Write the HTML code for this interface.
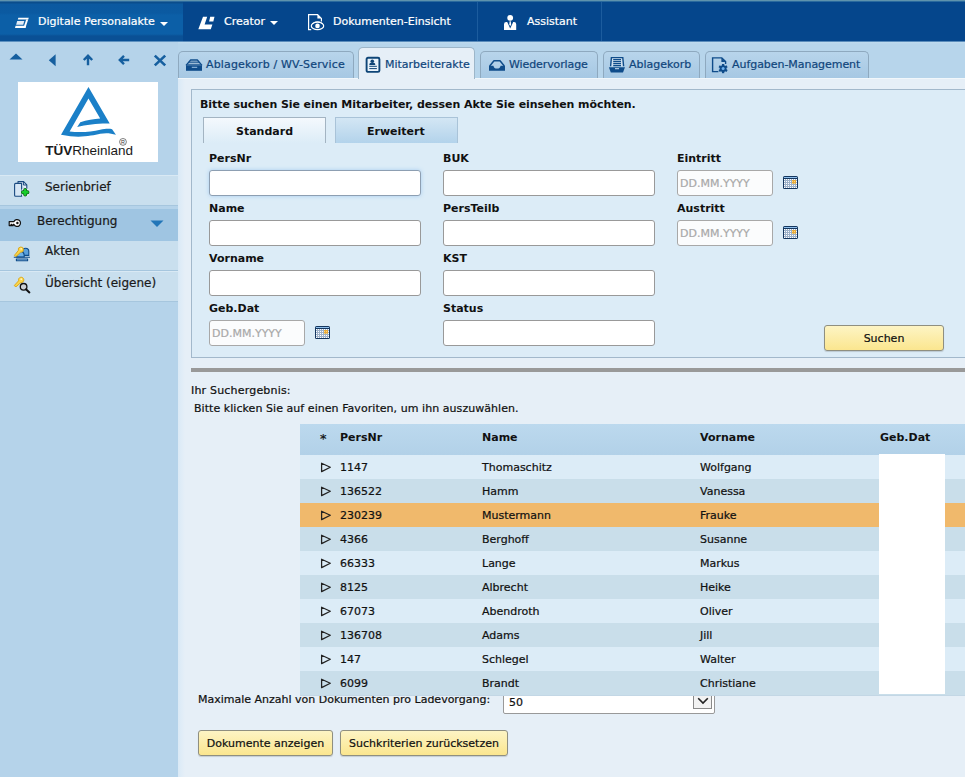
<!DOCTYPE html>
<html lang="de">
<head>
<meta charset="utf-8">
<title>Digitale Personalakte</title>
<style>
html,body{margin:0;padding:0;}
body{width:965px;height:777px;overflow:hidden;position:relative;background:#e6eff7;font-family:"DejaVu Sans","Liberation Sans",sans-serif;font-size:11px;color:#111;}
.a{position:absolute;}
.t{position:absolute;white-space:nowrap;line-height:14px;font-size:11px;-webkit-text-stroke:0.22px currentColor;}
.t.b{-webkit-text-stroke:0;}
.btn{-webkit-text-stroke:0.22px currentColor;}
.b{font-weight:bold;}
/* top bar */
#top{left:0;top:0;width:965px;height:42px;background:linear-gradient(#05468c 0,#05468c 41px,#5a8cbb 41px,#5a8cbb 42px);}
#top .seg1{left:0;top:0;width:183px;height:42px;background:linear-gradient(#0a4d8c 0,#0a4d8c 3px,#0b59a0 4px,#0b5aa1 13px,#0c5fa7 15px,#0c5fa7 34px,#0a5095 36px,#0a5095 41px,#5d91c0 41px,#5d91c0 42px);}
#top .line{left:0;top:0;width:965px;height:2px;background:linear-gradient(#5f93ad 0,#5f93ad 1px,#2a6a9e 1px,#2a6a9e 2px);}
#top .sep{top:2px;width:1px;height:39px;background:#1c5c9e;}
#top .t{color:#fff;top:15px;}
/* sidebar */
#side{left:0;top:42px;width:178px;height:735px;background:#b5d3ea;}
.mi{left:0;width:178px;background:#c9dfee;border-top:1px solid #d9e9f4;border-bottom:1px solid #a6c6de;box-sizing:border-box;}
.mi .t{font-size:12px;left:45px;color:#1a1a1a;}
/* tabs */
#tabbar{left:178px;top:42px;width:787px;height:36px;background:linear-gradient(#c0dbee 0,#b7d5eb 2px,#b7d5eb 36px);}
.tab{top:51px;height:27px;box-sizing:border-box;border:1px solid #8ea9bf;border-bottom:none;border-radius:5px 5px 0 0;background:linear-gradient(#b8d5eb,#a6c8e3);}
.tab .t{color:#10467c;top:6px;}
.tab.act{top:47px;height:32px;background:#e6eff7;border-color:#9db6c9;}
.tab.act .t{top:10px;}
#content{left:178px;top:78px;width:787px;height:699px;background:#e6eff7;border-top:1px solid #f1f7fb;box-sizing:border-box;background:linear-gradient(90deg,#d9e9f6 0,#dfecf7 3px,#e6eff7 7px);}
/* form panel */
#panel{left:191px;top:89px;width:800px;height:269px;box-sizing:border-box;background:#dcecf7;border:1px solid #a2b8cb;}
.in{height:26px;box-sizing:border-box;background:#fff;border:1px solid #999;border-radius:3px;}
.ph{color:#a9a9a9;}
.btn{box-sizing:border-box;height:26px;border:1px solid #8f8f80;border-radius:3px;background:linear-gradient(#fdf4c4,#fbe68f);text-align:center;line-height:26px;font-size:11px;color:#111;box-shadow:0 1px 1px rgba(0,0,0,.15);}
/* table */
.row{left:300px;width:665px;height:24px;}
.row .t{top:6px;}
.r0{background:#dcecf7;}
.r1{background:#c9deea;}
.sel{background:#f0b96c;}
</style>
</head>
<body>
<!-- TOP BAR -->
<div id="top" class="a">
  <div class="a seg1"></div>
  <div class="a line"></div>
  <div class="a sep" style="left:477px"></div>
  <div class="a sep" style="left:601px"></div>
  <span class="t" style="left:38px">Digitale Personalakte</span>
  <span class="t" style="left:224px">Creator</span>
  <span class="t" style="left:333px">Dokumenten-Einsicht</span>
  <span class="t" style="left:527px">Assistant</span>
</div>

<!-- SIDEBAR -->
<div id="side" class="a"></div>
<div class="a" id="logo" style="left:18px;top:82px;width:140px;height:80px;background:#fff;"></div>
<div class="a mi" style="top:175px;height:31px;"><span class="t" style="top:4px">Serienbrief</span></div>
<div class="a mi" style="top:209px;height:32px;background:#9fc5e2;border-color:#9fc5e2;"><span class="t" style="top:4px;left:37px">Berechtigung</span></div>
<div class="a mi" style="top:241px;height:30px;border-top:none"><span class="t" style="top:3px">Akten</span></div>
<div class="a mi" style="top:271px;height:31px;"><span class="t" style="top:4px">Übersicht (eigene)</span></div>

<!-- TABS -->
<div id="tabbar" class="a"></div>
<div id="content" class="a"></div>
<div class="a tab" style="left:178px;width:176px;"><span class="t" style="left:27px;letter-spacing:0.15px">Ablagekorb / WV-Service</span></div>
<div class="a tab act" style="left:358px;width:117px;"><span class="t" style="left:26px">Mitarbeiterakte</span></div>
<div class="a tab" style="left:480px;width:118px;"><span class="t" style="left:28px;letter-spacing:-0.1px">Wiedervorlage</span></div>
<div class="a tab" style="left:603px;width:97px;"><span class="t" style="left:25px">Ablagekorb</span></div>
<div class="a tab" style="left:705px;width:164px;"><span class="t" style="left:26px;letter-spacing:-0.05px">Aufgaben-Management</span></div>

<!-- FORM PANEL -->
<div id="panel" class="a"></div>
<span class="t b" style="left:200px;top:98px;letter-spacing:-0.07px">Bitte suchen Sie einen Mitarbeiter, dessen Akte Sie einsehen möchten.</span>

<!-- inner tabs -->
<div class="a" style="left:203px;top:117px;width:123px;height:26px;box-sizing:border-box;border:1px solid #a3b4c2;border-bottom:none;background:linear-gradient(#f4f9fd,#dcecf7);"></div>
<span class="t b" style="left:236px;top:125px">Standard</span>
<div class="a" style="left:335px;top:117px;width:123px;height:26px;box-sizing:border-box;border:1px solid #a9c3d8;border-bottom:none;background:linear-gradient(#d3e6f4,#b3d3eb);"></div>
<span class="t b" style="left:367px;top:125px">Erweitert</span>

<!-- labels -->
<span class="t b" style="left:209px;top:152px">PersNr</span>
<span class="t b" style="left:443px;top:152px">BUK</span>
<span class="t b" style="left:677px;top:152px">Eintritt</span>
<span class="t b" style="left:209px;top:202px">Name</span>
<span class="t b" style="left:443px;top:202px">PersTeilb</span>
<span class="t b" style="left:677px;top:202px">Austritt</span>
<span class="t b" style="left:209px;top:252px">Vorname</span>
<span class="t b" style="left:443px;top:252px">KST</span>
<span class="t b" style="left:209px;top:302px">Geb.Dat</span>
<span class="t b" style="left:443px;top:302px">Status</span>

<!-- inputs -->
<div class="a in" style="left:209px;top:170px;width:212px;border-color:#8d9fb2;box-shadow:0 0 4px #a8cdf0;"></div>
<div class="a in" style="left:443px;top:170px;width:212px;"></div>
<div class="a in" style="left:677px;top:170px;width:96px;border-color:#a8a8a8;background:#fbfcfd;"></div>
<span class="t ph" style="left:680px;top:177px">DD.MM.YYYY</span>
<div class="a in" style="left:209px;top:220px;width:212px;"></div>
<div class="a in" style="left:443px;top:220px;width:212px;"></div>
<div class="a in" style="left:677px;top:220px;width:96px;border-color:#a8a8a8;background:#fbfcfd;"></div>
<span class="t ph" style="left:680px;top:227px">DD.MM.YYYY</span>
<div class="a in" style="left:209px;top:270px;width:212px;"></div>
<div class="a in" style="left:443px;top:270px;width:212px;"></div>
<div class="a in" style="left:209px;top:320px;width:96px;border-color:#a8a8a8;background:#fbfcfd;"></div>
<span class="t ph" style="left:212px;top:327px">DD.MM.YYYY</span>
<div class="a in" style="left:443px;top:320px;width:212px;"></div>

<div class="a btn" style="left:824px;top:325px;width:120px;">Suchen</div>

<!-- separator -->
<div class="a" style="left:191px;top:368px;width:774px;height:4px;background:#999;"></div>

<!-- results -->
<span class="t" style="left:191px;top:384px;letter-spacing:0.19px">Ihr Suchergebnis:</span>
<span class="t" style="left:194px;top:402px;letter-spacing:0.055px">Bitte klicken Sie auf einen Favoriten, um ihn auszuwählen.</span>

<!-- bottom (under table) -->
<span class="t" style="left:198px;top:693px">Maximale Anzahl von Dokumenten pro Ladevorgang:</span>
<div class="a" style="left:503px;top:690px;width:212px;height:24px;box-sizing:border-box;background:#fff;border:1px solid #999;border-radius:2px;"></div>
<span class="t" style="left:509px;top:696px">50</span>
<div class="a" style="left:693px;top:690px;width:19px;height:19px;box-sizing:border-box;border:1px solid #8a8a8a;background:#f2f2f2;"></div>
<div class="a btn" style="left:198px;top:730px;width:135px;">Dokumente anzeigen</div>
<div class="a btn" style="left:340px;top:730px;width:168px;">Suchkriterien zurücksetzen</div>

<!-- table -->
<div class="a row" style="top:424px;height:31px;background:linear-gradient(#bcd9ee,#b2d1e8);">
  <span class="t" style="left:20px;top:8px;font-size:13px">*</span>
  <span class="t b" style="left:40px;top:7px">PersNr</span>
  <span class="t b" style="left:182px;top:7px">Name</span>
  <span class="t b" style="left:400px;top:7px">Vorname</span>
  <span class="t b" style="left:580px;top:7px">Geb.Dat</span>
</div>
<div class="a row r0" style="top:455px"><svg class="a" style="left:20px;top:7px" width="12" height="11" viewBox="0 0 12 11"><path d="M1.6 1.2 L10.3 5.3 L1.6 9.6 Z" fill="none" stroke="#222" stroke-width="1.25" stroke-linejoin="round"/></svg><span class="t" style="left:40px">1147</span><span class="t" style="left:182px">Thomaschitz</span><span class="t" style="left:400px">Wolfgang</span></div>
<div class="a row r1" style="top:479px"><svg class="a" style="left:20px;top:7px" width="12" height="11" viewBox="0 0 12 11"><path d="M1.6 1.2 L10.3 5.3 L1.6 9.6 Z" fill="none" stroke="#222" stroke-width="1.25" stroke-linejoin="round"/></svg><span class="t" style="left:40px">136522</span><span class="t" style="left:182px">Hamm</span><span class="t" style="left:400px">Vanessa</span></div>
<div class="a row sel" style="top:503px"><svg class="a" style="left:20px;top:7px" width="12" height="11" viewBox="0 0 12 11"><path d="M1.6 1.2 L10.3 5.3 L1.6 9.6 Z" fill="none" stroke="#222" stroke-width="1.25" stroke-linejoin="round"/></svg><span class="t" style="left:40px">230239</span><span class="t" style="left:182px">Mustermann</span><span class="t" style="left:400px">Frauke</span></div>
<div class="a row r1" style="top:527px"><svg class="a" style="left:20px;top:7px" width="12" height="11" viewBox="0 0 12 11"><path d="M1.6 1.2 L10.3 5.3 L1.6 9.6 Z" fill="none" stroke="#222" stroke-width="1.25" stroke-linejoin="round"/></svg><span class="t" style="left:40px">4366</span><span class="t" style="left:182px">Berghoff</span><span class="t" style="left:400px">Susanne</span></div>
<div class="a row r0" style="top:551px"><svg class="a" style="left:20px;top:7px" width="12" height="11" viewBox="0 0 12 11"><path d="M1.6 1.2 L10.3 5.3 L1.6 9.6 Z" fill="none" stroke="#222" stroke-width="1.25" stroke-linejoin="round"/></svg><span class="t" style="left:40px">66333</span><span class="t" style="left:182px">Lange</span><span class="t" style="left:400px">Markus</span></div>
<div class="a row r1" style="top:575px"><svg class="a" style="left:20px;top:7px" width="12" height="11" viewBox="0 0 12 11"><path d="M1.6 1.2 L10.3 5.3 L1.6 9.6 Z" fill="none" stroke="#222" stroke-width="1.25" stroke-linejoin="round"/></svg><span class="t" style="left:40px">8125</span><span class="t" style="left:182px">Albrecht</span><span class="t" style="left:400px">Heike</span></div>
<div class="a row r0" style="top:599px"><svg class="a" style="left:20px;top:7px" width="12" height="11" viewBox="0 0 12 11"><path d="M1.6 1.2 L10.3 5.3 L1.6 9.6 Z" fill="none" stroke="#222" stroke-width="1.25" stroke-linejoin="round"/></svg><span class="t" style="left:40px">67073</span><span class="t" style="left:182px">Abendroth</span><span class="t" style="left:400px">Oliver</span></div>
<div class="a row r1" style="top:623px"><svg class="a" style="left:20px;top:7px" width="12" height="11" viewBox="0 0 12 11"><path d="M1.6 1.2 L10.3 5.3 L1.6 9.6 Z" fill="none" stroke="#222" stroke-width="1.25" stroke-linejoin="round"/></svg><span class="t" style="left:40px">136708</span><span class="t" style="left:182px">Adams</span><span class="t" style="left:400px">Jill</span></div>
<div class="a row r0" style="top:647px"><svg class="a" style="left:20px;top:7px" width="12" height="11" viewBox="0 0 12 11"><path d="M1.6 1.2 L10.3 5.3 L1.6 9.6 Z" fill="none" stroke="#222" stroke-width="1.25" stroke-linejoin="round"/></svg><span class="t" style="left:40px">147</span><span class="t" style="left:182px">Schlegel</span><span class="t" style="left:400px">Walter</span></div>
<div class="a row r1" style="top:671px"><svg class="a" style="left:20px;top:7px" width="12" height="11" viewBox="0 0 12 11"><path d="M1.6 1.2 L10.3 5.3 L1.6 9.6 Z" fill="none" stroke="#222" stroke-width="1.25" stroke-linejoin="round"/></svg><span class="t" style="left:40px">6099</span><span class="t" style="left:182px">Brandt</span><span class="t" style="left:400px">Christiane</span></div>
<div class="a" style="left:300px;top:695px;width:665px;height:1px;background:#c3d7e5;"></div>
<div class="a" style="left:879px;top:454px;width:66px;height:240px;background:#fff;"></div>

<!-- top bar icons -->
<svg class="a" style="left:14px;top:17px" width="16" height="12" viewBox="0 0 16 12">
  <polygon points="4.3,0.7 14.8,0.7 14.2,2.4 3.8,2.4" fill="#fff"/>
  <polygon points="12.2,2.4 14.2,2.4 11.4,10.9 9.4,10.9" fill="#fff"/>
  <polygon points="1.6,8.8 12,8.8 11.4,10.9 1,10.9" fill="#fff"/>
  <polygon points="3.2,3.9 10.3,3.9 9.2,7.7 2.1,7.7" fill="#e4edf6"/>
</svg>
<svg class="a" style="left:160px;top:22px" width="8" height="4" viewBox="0 0 8 4"><polygon points="0,0 8,0 4,4" fill="#fff"/></svg>
<svg class="a" style="left:198px;top:16px" width="17" height="14" viewBox="0 0 17 14">
  <polygon points="5,0.7 9.2,0.7 6.6,8.5 14.4,8.5 12.8,13.2 0.3,13.2" fill="#fff"/>
  <polygon points="12.2,0.7 16.5,0.7 15.3,5.4 11.1,5.4" fill="#fff"/>
</svg>
<svg class="a" style="left:270px;top:21px" width="8" height="4" viewBox="0 0 8 4"><polygon points="0,0 8,0 4,4" fill="#fff"/></svg>
<svg class="a" style="left:307px;top:13px" width="18" height="19" viewBox="0 0 18 19">
  <path d="M4.2 16.6 H1.6 V1.6 H10.6 L14.4 5.4 V8.5" fill="none" stroke="#fff" stroke-width="1.2"/>
  <path d="M10.4 1.6 V5.6 H14.4 Z" fill="#fff"/>
  <ellipse cx="10.5" cy="12.9" rx="6.2" ry="3.7" fill="none" stroke="#fff" stroke-width="1.2"/>
  <path d="M5 11 Q10.5 6.5 16 11" fill="none" stroke="#fff" stroke-width="1"/>
  <circle cx="10.5" cy="12.9" r="2.3" fill="#fff"/>
</svg>
<svg class="a" style="left:503px;top:14px" width="14" height="17" viewBox="0 0 14 17">
  <circle cx="7.2" cy="3.8" r="2.9" fill="#fff"/>
  <path d="M1 15.9 V10.2 Q1 8 3.2 8 H4.2 L7.2 14.4 L10.2 8 H11 Q13.2 8 13.2 10.2 V15.9 Z" fill="#fff"/>
  <path d="M6.6 7.2 H7.8 L8.1 10.6 L7.2 12.2 L6.3 10.6 Z" fill="#fff"/>
</svg>

<!-- sidebar toolbar -->
<svg class="a" style="left:9px;top:53px" width="14" height="7" viewBox="0 0 14 7"><polygon points="7,0.5 13.5,6.5 0.5,6.5" fill="#165f9f"/></svg>
<svg class="a" style="left:48px;top:54px" width="8" height="13" viewBox="0 0 8 13"><polygon points="7.6,0.3 7.6,12.3 0.8,6.3" fill="#165f9f"/></svg>
<svg class="a" style="left:82px;top:54px" width="12" height="12" viewBox="0 0 12 12"><path d="M6 11.2 V2.4 M1.8 6 L6 1.8 L10.2 6" fill="none" stroke="#165f9f" stroke-width="2.4"/></svg>
<svg class="a" style="left:118px;top:54px" width="12" height="12" viewBox="0 0 12 12"><path d="M11.2 6 H2.4 M6 1.8 L1.8 6 L6 10.2" fill="none" stroke="#165f9f" stroke-width="2.4"/></svg>
<svg class="a" style="left:153px;top:54px" width="14" height="13" viewBox="0 0 14 13"><path d="M1.8 1.6 L12.2 11.4 M12.2 1.6 L1.8 11.4" fill="none" stroke="#165f9f" stroke-width="2.6"/></svg>

<!-- logo -->
<svg class="a" style="left:38px;top:82px" width="100" height="80" viewBox="0 0 965 772">
  <path d="M487 48 L692 400 C600 396 470 410 378 434 L408 388 C470 370 540 358 600 353 L487 160 L305 478 C420 492 520 478 600 460 C650 450 690 450 715 455 L752 510 C700 492 650 490 600 500 C520 518 400 546 222 510 Z" fill="#1b80c8"/>
  <circle cx="820" cy="578" r="33" fill="none" stroke="#333" stroke-width="6"/>
  <text x="820" y="600" font-family="Liberation Sans, sans-serif" font-size="52" text-anchor="middle" fill="#333">R</text>
  <text x="70" y="708" font-family="Liberation Sans, sans-serif" font-size="121" fill="#1a1a1a" textLength="848" lengthAdjust="spacingAndGlyphs"><tspan font-weight="bold">TÜV</tspan>Rheinland</text>
</svg>

<!-- tab icons -->
<svg class="a" style="left:185px;top:59px" width="18" height="13" viewBox="0 0 18 13">
  <path d="M1 6.4 L5.6 1 H12.4 L17 6.4" fill="#cfe0ee" stroke="#0f4c8a" stroke-width="1.3" stroke-linejoin="round"/>
  <path d="M3.9 3.1 H14.1 M2.2 5.2 H15.8" stroke="#0f4c8a" stroke-width="1.1"/>
  <rect x="1" y="6.2" width="16" height="5.6" fill="#0f4c8a"/>
  <rect x="6.8" y="7.8" width="5.4" height="1" fill="#9ec3e4"/>
</svg>
<svg class="a" style="left:365px;top:56px" width="17" height="18" viewBox="0 0 17 18">
  <rect x="1.6" y="1.8" width="12.8" height="14.1" rx="1.4" fill="#e9f3fb" stroke="#0e4577" stroke-width="1.9"/>
  <circle cx="7.3" cy="5.3" r="1.8" fill="#0e4577"/>
  <path d="M4.3 8.9 Q4.3 6.5 7.3 6.5 Q10.3 6.5 10.3 8.9 Z" fill="#0e4577"/>
  <path d="M4.3 10.3 H11.9 M4.3 12.6 H11.9" stroke="#0e4577" stroke-width="1"/>
</svg>
<svg class="a" style="left:488px;top:59px" width="18" height="13" viewBox="0 0 18 13">
  <path d="M1.7 7 L6 1.7 H12 L16.3 7" fill="none" stroke="#0f4c8a" stroke-width="1.5" stroke-linejoin="round"/>
  <path d="M1 6.7 H5.4 Q6 9.6 9 9.6 Q12 9.6 12.6 6.7 H17 V11.8 H1 Z" fill="#0f4c8a"/>
</svg>
<svg class="a" style="left:608px;top:56px" width="18" height="18" viewBox="0 0 18 18">
  <path d="M2.6 10.2 L3.4 1.6 H14.8 L15.6 10.2" fill="#cfe0ee" stroke="#0f4c8a" stroke-width="1.4"/>
  <path d="M5.2 3.6 H13 M5.2 5.6 H13 M5.2 7.6 H13 M5.2 9.6 H13" stroke="#0f4c8a" stroke-width="1.1"/>
  <path d="M0.9 11.2 H17 L15 16.6 H2.8 Z" fill="#0f4c8a"/>
  <rect x="7" y="12.2" width="4" height="1" fill="#cfe0ee"/>
</svg>
<svg class="a" style="left:711px;top:56px" width="18" height="18" viewBox="0 0 18 18">
  <path d="M7.4 15.6 H1.6 V1.9 H10.8 L14.6 5.6 V8" fill="none" stroke="#0f4c8a" stroke-width="1.4"/>
  <path d="M10.4 1.9 V6 H14.6 Z" fill="#0f4c8a"/>
  <g transform="translate(12.1,12.6)">
    <circle r="3.4" fill="#0f4c8a"/>
    <g fill="#0f4c8a">
      <rect x="-1.15" y="-4.6" width="2.3" height="9.2"/>
      <rect x="-1.15" y="-4.6" width="2.3" height="9.2" transform="rotate(60)"/>
      <rect x="-1.15" y="-4.6" width="2.3" height="9.2" transform="rotate(120)"/>
    </g>
    <circle r="1.5" fill="#6fb3f0"/>
  </g>
</svg>

<!-- sidebar icons -->
<svg class="a" style="left:13px;top:180px" width="17" height="18" viewBox="0 0 17 18">
  <path d="M5 3.4 V1.6 H10.6 L13.8 4.8 V9" fill="#e4eef7" stroke="#1a4a80" stroke-width="1.1" stroke-linejoin="round"/>
  <path d="M10.4 1.6 V5 H13.8" fill="none" stroke="#1a4a80" stroke-width="1"/>
  <path d="M1.6 4.4 Q1.6 3.4 2.6 3.4 H8.6 V16.2 H2.6 Q1.6 16.2 1.6 15.2 Z" fill="#d6e6f4" stroke="#1a4a80" stroke-width="1.1" stroke-linejoin="round"/>
  <circle cx="12.2" cy="12.3" r="4.4" fill="#eaf3fa" opacity="0.85"/>
  <path d="M12.2 10 V14.6 M9.9 12.3 H14.5" stroke="#0b5a14" stroke-width="3.9" stroke-linecap="round"/>
  <path d="M12.2 10 V14.6 M9.9 12.3 H14.5" stroke="#18cc2a" stroke-width="2.5" stroke-linecap="round"/>
</svg>
<svg class="a" style="left:8px;top:218px" width="14" height="10" viewBox="0 0 14 10">
  <path d="M1.2 3.6 H6 A3.4 3.4 0 1 1 6 6.4 H5.2 V7.6 H3.8 V6.4 H3 V7.6 H1.2 Z" fill="#fff" stroke="#111" stroke-width="1.2" stroke-linejoin="round"/>
  <circle cx="9.4" cy="5" r="1.2" fill="#111"/>
</svg>
<svg class="a" style="left:13px;top:245px" width="18" height="18" viewBox="0 0 18 18">
  <path d="M9.6 6.2 Q9.6 3.2 12.6 3.2 Q15.8 3.2 15.8 6.4 V10.4 H9.6 Z" fill="#5aa0dc" stroke="#0f4c8a" stroke-width="1.1"/>
  <path d="M3.6 10.8 Q3.6 6.4 7.4 6.4 Q11.2 6.4 11.2 10.8 V12 H3.6 Z" fill="#6db0e6" stroke="#0f4c8a" stroke-width="1.1"/>
  <path d="M0.8 12.2 H17 M3.4 14 H14.6 V15.8 H3.4 Z" fill="#9ccaf0" stroke="#0f4c8a" stroke-width="1.1" stroke-linejoin="round"/>
  <path d="M1.4 10.4 L5.4 5.4 A2.6 2.6 0 1 1 7.6 7.2 L3 11.6 Z" fill="#fbd54a" stroke="#d9a514" stroke-width="0.9" stroke-linejoin="round"/>
  <circle cx="8.2" cy="3.8" r="0.9" fill="#fff5c0"/>
</svg>
<svg class="a" style="left:13px;top:275px" width="18" height="19" viewBox="0 0 18 19">
  <path d="M1.2 10.6 L5.6 5.8 A2.7 2.7 0 1 1 7.8 7.6 L3 11.8 Z" fill="#fbd54a" stroke="#d9a514" stroke-width="0.9" stroke-linejoin="round"/>
  <circle cx="8.3" cy="4.2" r="0.9" fill="#fff5c0"/>
  <circle cx="10.6" cy="11.8" r="3.3" fill="#c9ced3" stroke="#111" stroke-width="1.3"/>
  <path d="M13 14.3 L16.4 17.4" stroke="#111" stroke-width="2" stroke-linecap="round"/>
</svg>
<svg class="a" style="left:150px;top:220px" width="14" height="8" viewBox="0 0 14 8"><polygon points="0.5,0.5 13.5,0.5 7,7" fill="#2276b8"/></svg>
<svg class="a" style="left:783px;top:176px" width="16" height="14" viewBox="0 0 16 14" shape-rendering="auto">
  <rect x="0" y="0" width="15" height="13" rx="1.6" fill="#14365f"/>
  <rect x="1" y="1" width="13" height="1" fill="#8fc0ee"/>
  <rect x="1" y="3" width="13" height="9" fill="#9db1c9"/>
  <rect x="9" y="4" width="4" height="3.6" fill="#e9a838"/>
  <rect x="1" y="3" width="1" height="1" fill="#fff"/><rect x="3" y="3" width="1" height="1" fill="#fff"/><rect x="5" y="3" width="1" height="1" fill="#fff"/><rect x="7" y="3" width="1" height="1" fill="#fff"/><rect x="9" y="3" width="1" height="1" fill="#fff"/><rect x="11" y="3" width="1" height="1" fill="#fff"/><rect x="13" y="3" width="1" height="1" fill="#fff"/><rect x="1" y="5" width="1" height="1" fill="#fff"/><rect x="3" y="5" width="1" height="1" fill="#fff"/><rect x="5" y="5" width="1" height="1" fill="#fff"/><rect x="7" y="5" width="1" height="1" fill="#fff"/><rect x="9" y="5" width="1" height="1" fill="#ffdc7a"/><rect x="11" y="5" width="1" height="1" fill="#ffdc7a"/><rect x="13" y="5" width="1" height="1" fill="#fff"/><rect x="1" y="7" width="1" height="1" fill="#fff"/><rect x="3" y="7" width="1" height="1" fill="#fff"/><rect x="5" y="7" width="1" height="1" fill="#fff"/><rect x="7" y="7" width="1" height="1" fill="#fff"/><rect x="9" y="7" width="1" height="1" fill="#ffdc7a"/><rect x="11" y="7" width="1" height="1" fill="#ffdc7a"/><rect x="13" y="7" width="1" height="1" fill="#fff"/><rect x="1" y="9" width="1" height="1" fill="#fff"/><rect x="3" y="9" width="1" height="1" fill="#fff"/><rect x="5" y="9" width="1" height="1" fill="#fff"/><rect x="7" y="9" width="1" height="1" fill="#fff"/><rect x="9" y="9" width="1" height="1" fill="#fff"/><rect x="11" y="9" width="1" height="1" fill="#fff"/><rect x="13" y="9" width="1" height="1" fill="#fff"/><rect x="1" y="11" width="1" height="1" fill="#fff"/><rect x="3" y="11" width="1" height="1" fill="#fff"/><rect x="5" y="11" width="1" height="1" fill="#fff"/><rect x="7" y="11" width="1" height="1" fill="#fff"/><rect x="9" y="11" width="1" height="1" fill="#fff"/><rect x="11" y="11" width="1" height="1" fill="#fff"/><rect x="13" y="11" width="1" height="1" fill="#fff"/>
</svg>
<svg class="a" style="left:783px;top:226px" width="16" height="14" viewBox="0 0 16 14" shape-rendering="auto">
  <rect x="0" y="0" width="15" height="13" rx="1.6" fill="#14365f"/>
  <rect x="1" y="1" width="13" height="1" fill="#8fc0ee"/>
  <rect x="1" y="3" width="13" height="9" fill="#9db1c9"/>
  <rect x="9" y="4" width="4" height="3.6" fill="#e9a838"/>
  <rect x="1" y="3" width="1" height="1" fill="#fff"/><rect x="3" y="3" width="1" height="1" fill="#fff"/><rect x="5" y="3" width="1" height="1" fill="#fff"/><rect x="7" y="3" width="1" height="1" fill="#fff"/><rect x="9" y="3" width="1" height="1" fill="#fff"/><rect x="11" y="3" width="1" height="1" fill="#fff"/><rect x="13" y="3" width="1" height="1" fill="#fff"/><rect x="1" y="5" width="1" height="1" fill="#fff"/><rect x="3" y="5" width="1" height="1" fill="#fff"/><rect x="5" y="5" width="1" height="1" fill="#fff"/><rect x="7" y="5" width="1" height="1" fill="#fff"/><rect x="9" y="5" width="1" height="1" fill="#ffdc7a"/><rect x="11" y="5" width="1" height="1" fill="#ffdc7a"/><rect x="13" y="5" width="1" height="1" fill="#fff"/><rect x="1" y="7" width="1" height="1" fill="#fff"/><rect x="3" y="7" width="1" height="1" fill="#fff"/><rect x="5" y="7" width="1" height="1" fill="#fff"/><rect x="7" y="7" width="1" height="1" fill="#fff"/><rect x="9" y="7" width="1" height="1" fill="#ffdc7a"/><rect x="11" y="7" width="1" height="1" fill="#ffdc7a"/><rect x="13" y="7" width="1" height="1" fill="#fff"/><rect x="1" y="9" width="1" height="1" fill="#fff"/><rect x="3" y="9" width="1" height="1" fill="#fff"/><rect x="5" y="9" width="1" height="1" fill="#fff"/><rect x="7" y="9" width="1" height="1" fill="#fff"/><rect x="9" y="9" width="1" height="1" fill="#fff"/><rect x="11" y="9" width="1" height="1" fill="#fff"/><rect x="13" y="9" width="1" height="1" fill="#fff"/><rect x="1" y="11" width="1" height="1" fill="#fff"/><rect x="3" y="11" width="1" height="1" fill="#fff"/><rect x="5" y="11" width="1" height="1" fill="#fff"/><rect x="7" y="11" width="1" height="1" fill="#fff"/><rect x="9" y="11" width="1" height="1" fill="#fff"/><rect x="11" y="11" width="1" height="1" fill="#fff"/><rect x="13" y="11" width="1" height="1" fill="#fff"/>
</svg>
<svg class="a" style="left:315px;top:326px" width="16" height="14" viewBox="0 0 16 14" shape-rendering="auto">
  <rect x="0" y="0" width="15" height="13" rx="1.6" fill="#14365f"/>
  <rect x="1" y="1" width="13" height="1" fill="#8fc0ee"/>
  <rect x="1" y="3" width="13" height="9" fill="#9db1c9"/>
  <rect x="9" y="4" width="4" height="3.6" fill="#e9a838"/>
  <rect x="1" y="3" width="1" height="1" fill="#fff"/><rect x="3" y="3" width="1" height="1" fill="#fff"/><rect x="5" y="3" width="1" height="1" fill="#fff"/><rect x="7" y="3" width="1" height="1" fill="#fff"/><rect x="9" y="3" width="1" height="1" fill="#fff"/><rect x="11" y="3" width="1" height="1" fill="#fff"/><rect x="13" y="3" width="1" height="1" fill="#fff"/><rect x="1" y="5" width="1" height="1" fill="#fff"/><rect x="3" y="5" width="1" height="1" fill="#fff"/><rect x="5" y="5" width="1" height="1" fill="#fff"/><rect x="7" y="5" width="1" height="1" fill="#fff"/><rect x="9" y="5" width="1" height="1" fill="#ffdc7a"/><rect x="11" y="5" width="1" height="1" fill="#ffdc7a"/><rect x="13" y="5" width="1" height="1" fill="#fff"/><rect x="1" y="7" width="1" height="1" fill="#fff"/><rect x="3" y="7" width="1" height="1" fill="#fff"/><rect x="5" y="7" width="1" height="1" fill="#fff"/><rect x="7" y="7" width="1" height="1" fill="#fff"/><rect x="9" y="7" width="1" height="1" fill="#ffdc7a"/><rect x="11" y="7" width="1" height="1" fill="#ffdc7a"/><rect x="13" y="7" width="1" height="1" fill="#fff"/><rect x="1" y="9" width="1" height="1" fill="#fff"/><rect x="3" y="9" width="1" height="1" fill="#fff"/><rect x="5" y="9" width="1" height="1" fill="#fff"/><rect x="7" y="9" width="1" height="1" fill="#fff"/><rect x="9" y="9" width="1" height="1" fill="#fff"/><rect x="11" y="9" width="1" height="1" fill="#fff"/><rect x="13" y="9" width="1" height="1" fill="#fff"/><rect x="1" y="11" width="1" height="1" fill="#fff"/><rect x="3" y="11" width="1" height="1" fill="#fff"/><rect x="5" y="11" width="1" height="1" fill="#fff"/><rect x="7" y="11" width="1" height="1" fill="#fff"/><rect x="9" y="11" width="1" height="1" fill="#fff"/><rect x="11" y="11" width="1" height="1" fill="#fff"/><rect x="13" y="11" width="1" height="1" fill="#fff"/>
</svg>

<svg class="a" style="left:697px;top:697px" width="12" height="8" viewBox="0 0 12 8"><path d="M1.2 1.2 L6 6 L10.8 1.2" fill="none" stroke="#222" stroke-width="1.6"/></svg>

</body>
</html>
